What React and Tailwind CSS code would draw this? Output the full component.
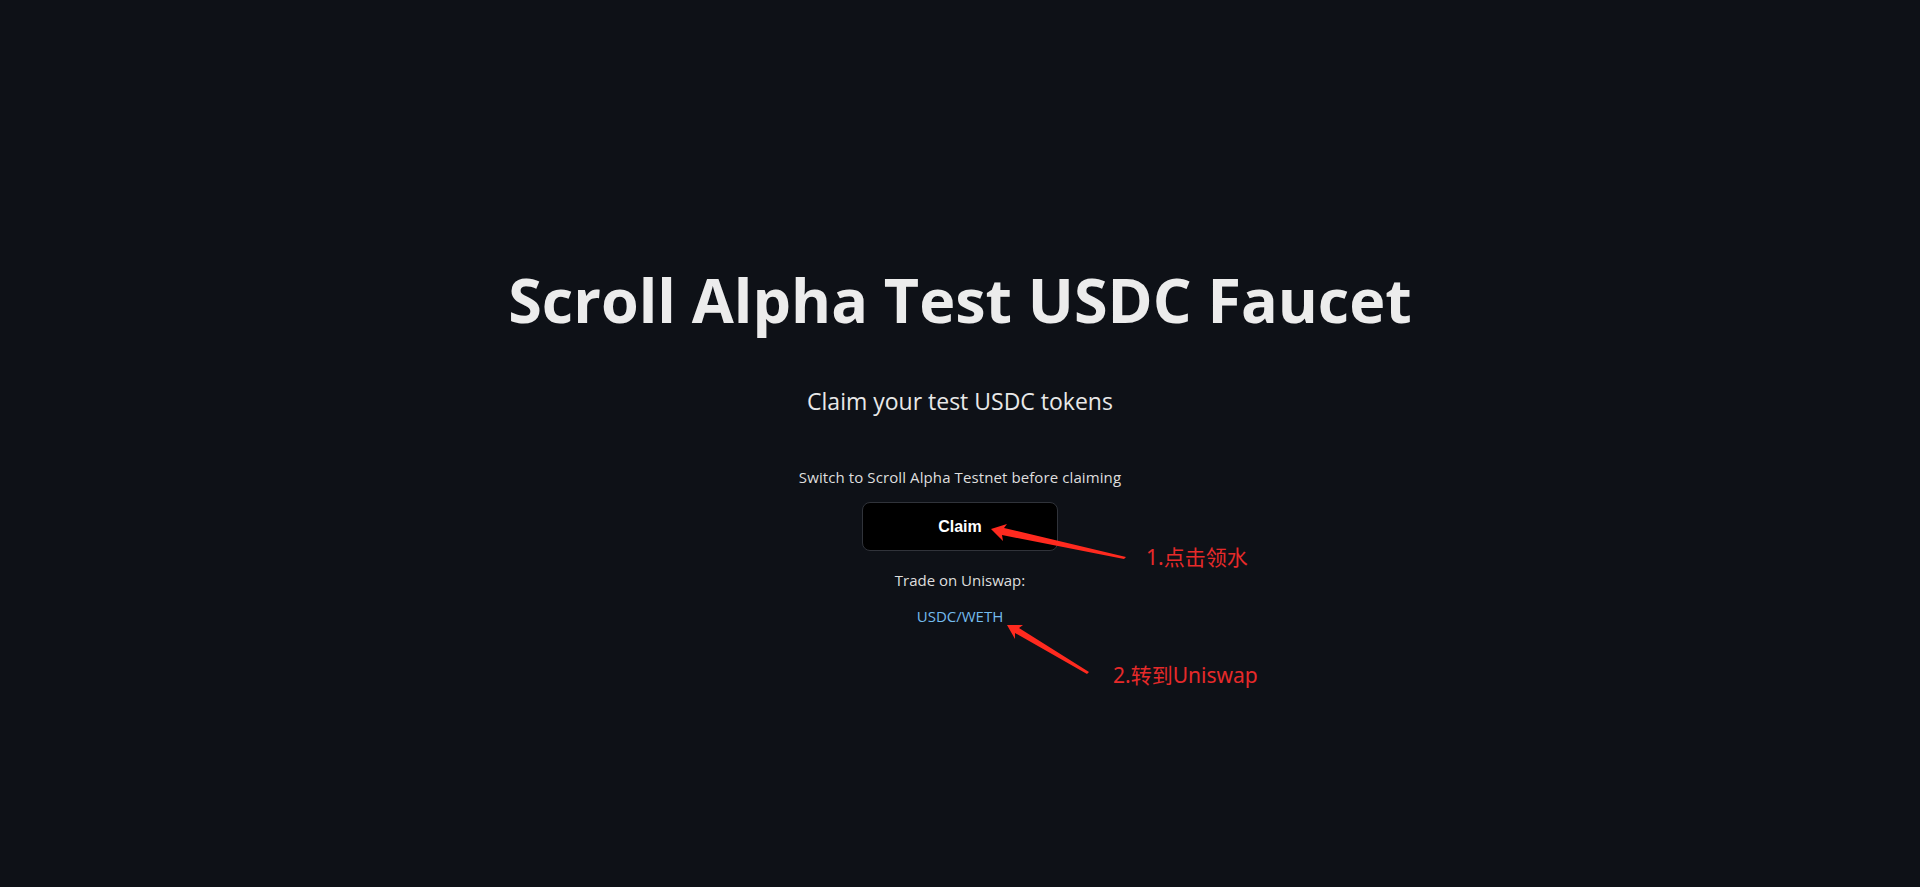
export default function App() {
  return (
    <div className="relative min-h-screen w-full bg-[#0e1117] font-['Open_Sans','Noto_Sans',sans-serif]">
      <main className="flex flex-col items-center pt-[262px]">
        <h1 className="text-[61px] font-bold leading-[76px] text-[#ececec]">
          Scroll Alpha Test USDC Faucet
        </h1>
        <p className="mt-[48px] text-[23px] leading-[30px] text-[#e8e8e8]">Claim your test USDC tokens</p>
        <p className="mt-[50px] text-[15px] leading-[22px] tracking-[0.1px] text-[#dedede]">
          Switch to Scroll Alpha Testnet before claiming
        </p>
        <button className="mt-[14px] h-[49px] w-[196px] rounded-lg border border-[#30333a] bg-black font-['Liberation_Sans',sans-serif] text-[16px] font-bold text-white">
          Claim
        </button>
        <p className="mt-[18px] text-[15px] leading-[22px] text-[#dedede]">Trade on Uniswap:</p>
        <a href="#" className="mt-[14px] text-[15px] leading-[22px] text-[#74bcee]">
          USDC/WETH
        </a>
      </main>

      {/* annotations */}
      <svg className="pointer-events-none absolute left-0 top-0" width="1920" height="887">
        <polygon points="991,529 1007,524 1004,528 1126,557 1124,559 1002,535 1003,541" fill="#ff2a1f" />
        <polygon points="1007,625 1023,625 1019,628 1089,672 1087,674 1015,633 1015,639" fill="#ff2a1f" />
      </svg>
      <span className="absolute left-[1146px] top-[543px] font-['Noto_Sans','Noto_Sans_CJK_SC',sans-serif] text-[21px] leading-[28px] text-[#e62a2a]">
        1.点击领水
      </span>
      <span className="absolute left-[1113px] top-[661px] font-['Noto_Sans','Noto_Sans_CJK_SC',sans-serif] text-[21px] leading-[28px] text-[#e62a2a]">
        2.转到Uniswap
      </span>
    </div>
  );
}
